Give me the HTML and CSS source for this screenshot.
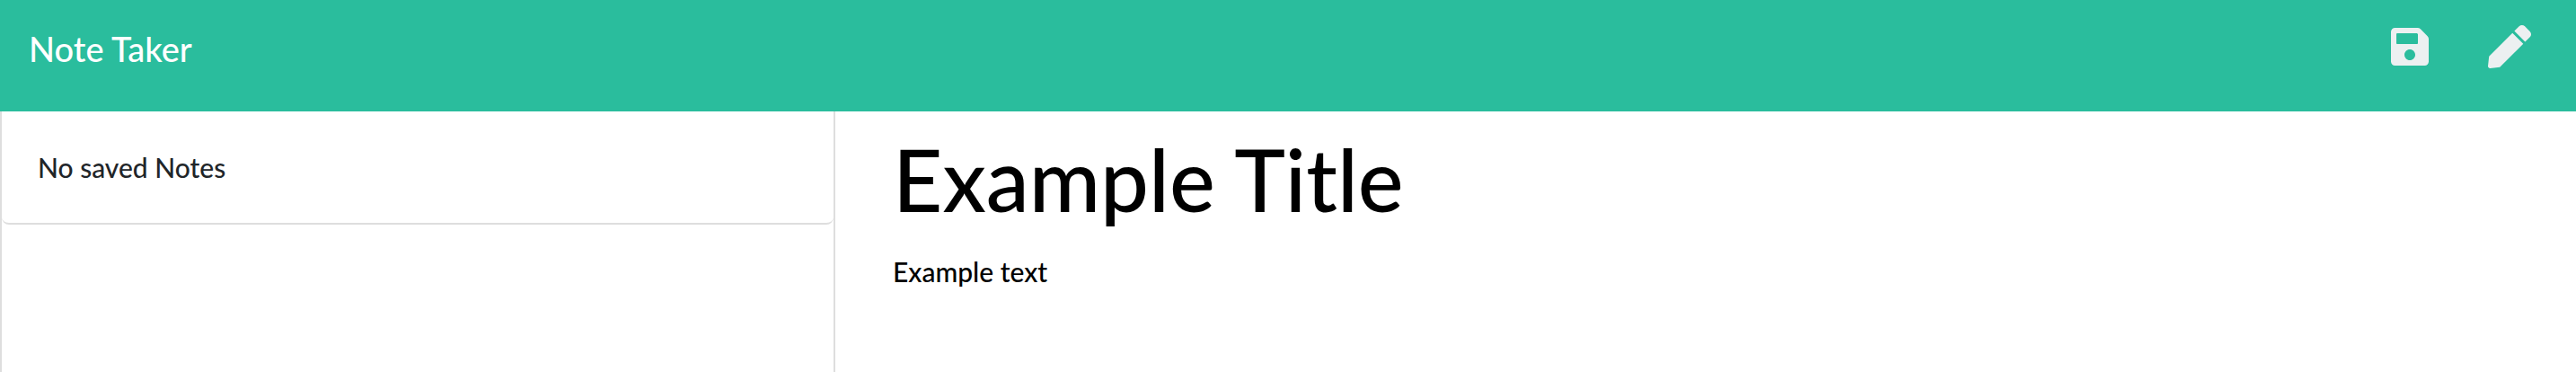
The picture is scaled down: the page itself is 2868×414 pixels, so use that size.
FILE: index.html
```html
<!DOCTYPE html>
<html lang="en">
<head>
<meta charset="utf-8">
<title>Note Taker</title>
<link rel="stylesheet" href="styles.css">
</head>
<body>
<header class="navbar">
  <a class="brand" href="#">Note Taker</a>
  <div class="actions">
    <button class="icon-button" type="button" aria-label="Save note">
      <svg class="icon" viewBox="0 0 448 512" width="42" height="48" aria-hidden="true"><path d="M433.941 129.941l-83.882-83.882A48 48 0 0 0 316.118 32H48C21.49 32 0 53.49 0 80v352c0 26.51 21.49 48 48 48h352c26.51 0 48-21.49 48-48V163.882a48 48 0 0 0-14.059-33.941zM224 416c-35.346 0-64-28.654-64-64 0-35.346 28.654-64 64-64s64 28.654 64 64c0 35.346-28.654 64-64 64zm96-304.52V212c0 6.627-5.373 12-12 12H76c-6.627 0-12-5.373-12-12V108c0-6.627 5.373-12 12-12h228.52c3.183 0 6.235 1.264 8.485 3.515l3.48 3.48A11.996 11.996 0 0 1 320 111.48z"/></svg>
    </button>
    <button class="icon-button" type="button" aria-label="New note">
      <svg class="icon" viewBox="0 0 512 512" width="48" height="48" aria-hidden="true"><path d="M290.74 93.24l128.02 128.02-277.99 277.99-114.14 12.6C11.35 513.54-1.56 500.62.14 485.34l12.7-114.22 277.9-277.88zm207.2-19.06l-60.11-60.11c-18.75-18.75-49.16-18.75-67.91 0l-56.55 56.55 128.02 128.02 56.55-56.55c18.75-18.76 18.75-49.16 0-67.91z"/></svg>
    </button>
  </div>
</header>
<main class="workspace">
  <aside class="sidebar">
    <ul class="note-list">
      <li class="note-item">No saved Notes</li>
    </ul>
  </aside>
  <section class="editor">
    <input class="note-title" type="text" aria-label="Note title" value="Example Title">
    <textarea class="note-text" aria-label="Note text" spellcheck="false">Example text</textarea>
  </section>
</main>
</body>
</html>
```
FILE: styles.css
```css
* {
  box-sizing: border-box;
}

body {
  display: flex;
  flex-direction: column;
  min-height: 100vh;
  margin: 0;
  background: #fff;
  color: #212529;
  font-family: Lato, "Liberation Sans", sans-serif;
  font-size: 30px;
  font-weight: 500;
  line-height: 44px;
}

.navbar {
  display: flex;
  justify-content: space-between;
  align-items: flex-start;
  padding: 26px 50px 42px 32px;
  background: #2abd9d;
}

.brand {
  color: #fff;
  font-size: 38px;
  line-height: 56px;
  text-decoration: none;
}

.actions {
  display: flex;
  gap: 66px;
  padding-top: 2px;
}

.icon-button {
  display: flex;
  padding: 0;
  border: 0;
  background: none;
  color: #ecf0f1;
  cursor: pointer;
}

.icon {
  fill: currentColor;
}

.workspace {
  flex: 1;
  display: grid;
  grid-template-columns: calc(100% / 3 - 26px) 1fr;
}

.sidebar {
  border: solid #dedede;
  border-width: 0 2px;
}

.note-list {
  margin: 0;
  padding: 0;
  list-style: none;
}

.note-item {
  padding: 40px;
  border-bottom: 2px solid #dedede;
  border-radius: 0 0 8px 8px;
}

.editor {
  display: flex;
  flex-direction: column;
  gap: 8px;
  padding: 4px 64px 0;
}

.note-title,
.note-text {
  width: 100%;
  margin: 0;
  padding: 0;
  border: 0;
  outline: 0;
  background: none;
  color: #000;
  font-family: inherit;
  font-weight: inherit;
}

.note-title {
  height: 140px;
  font-size: 96px;
}

.note-text {
  flex: 1;
  margin-top: 4px;
  font-size: 30px;
  line-height: 44px;
  resize: none;
}
```
